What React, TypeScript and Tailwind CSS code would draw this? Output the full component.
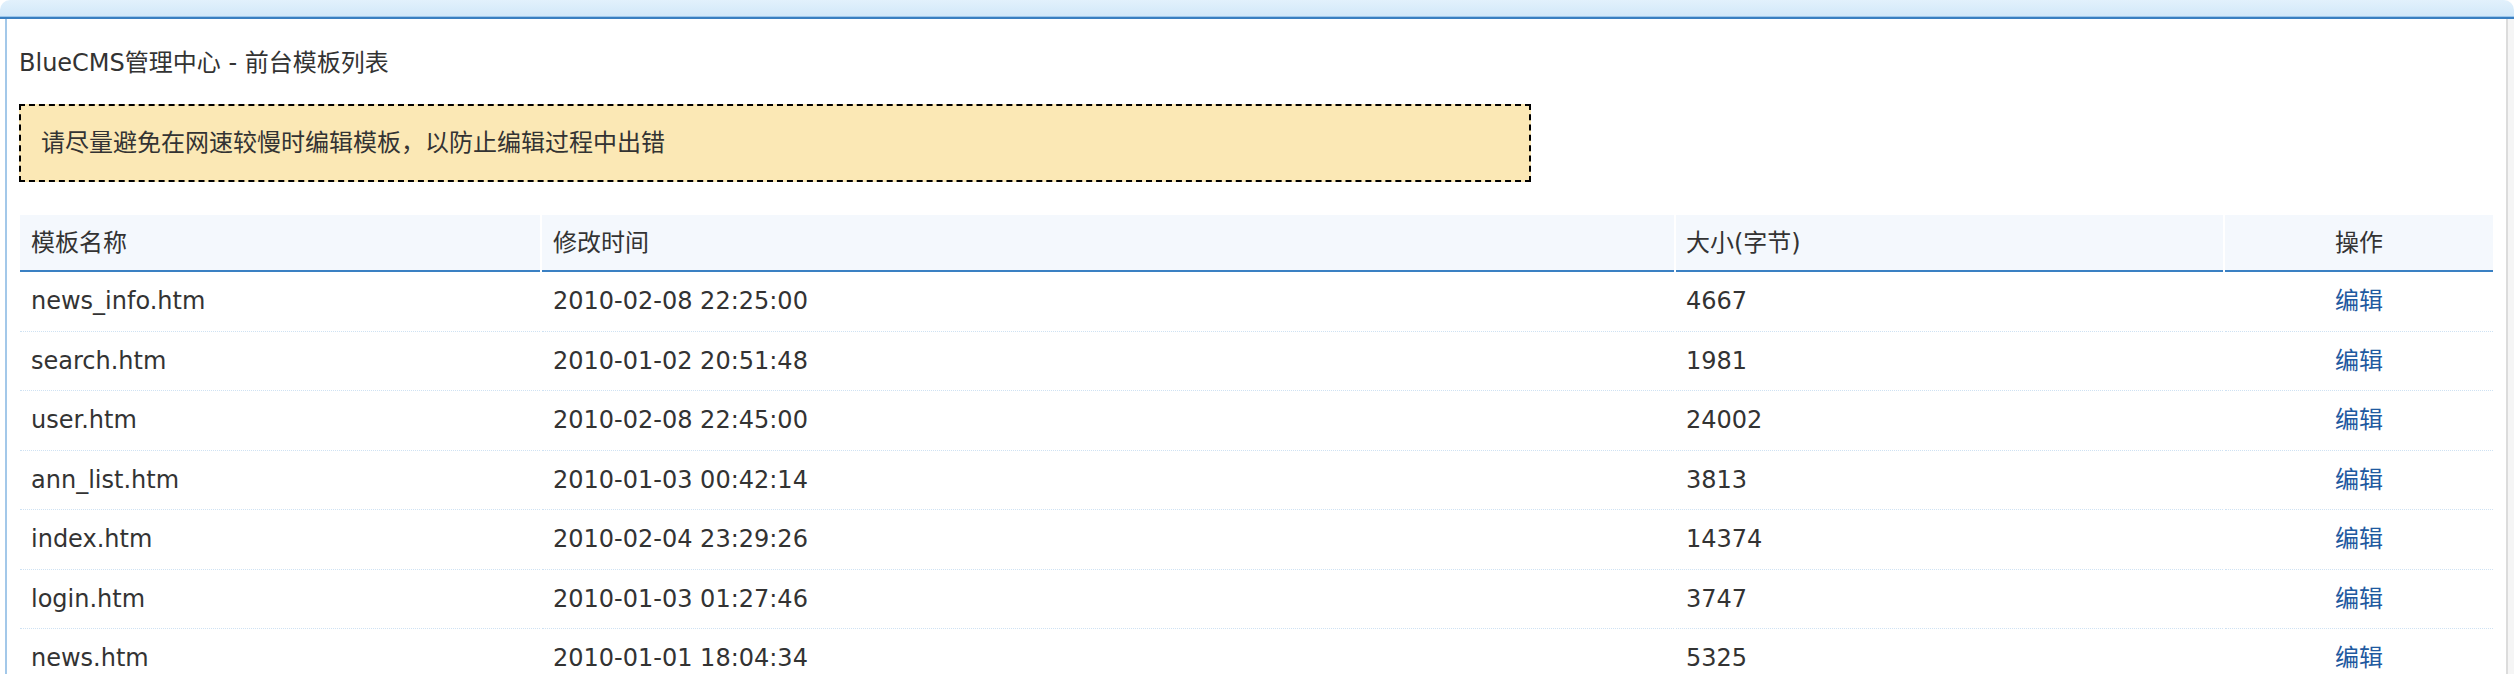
const ROWS = [
  { name: "news_info.htm", time: "2010-02-08 22:25:00", size: "4667" },
  { name: "search.htm", time: "2010-01-02 20:51:48", size: "1981" },
  { name: "user.htm", time: "2010-02-08 22:45:00", size: "24002" },
  { name: "ann_list.htm", time: "2010-01-03 00:42:14", size: "3813" },
  { name: "index.htm", time: "2010-02-04 23:29:26", size: "14374" },
  { name: "login.htm", time: "2010-01-03 01:27:46", size: "3747" },
  { name: "news.htm", time: "2010-01-01 18:04:34", size: "5325" },
];

export default function App() {
  return (
    <div className="min-h-screen bg-white font-['DejaVu_Sans','Noto_Sans_CJK_SC',sans-serif] text-[24px] text-[#333]">
      {/* Top bar */}
      <div className="h-[16px] rounded-t-[10px] bg-gradient-to-b from-[#e2f1fc] to-[#d2e8f9]" />
      <div className="h-[1px] bg-[#9cc7ec]" />
      <div className="h-[2px] bg-[#3a7fc1]" />

      <div className="flex min-h-[655px]">
        <div className="ml-[5px] flex-1 border-l-2 border-[#a3c8e9] pl-[11px] pr-[11px] pt-[26px]">
          <h1 className="ml-[1px] h-[36px] text-[24px] font-normal leading-[36px]">BlueCMS管理中心 - 前台模板列表</h1>

          {/* Notice */}
          <div className="ml-[1px] mt-[23px] flex h-[78px] w-[1512px] items-center border-2 border-dashed border-black bg-[#fbe8b5] pl-[20px]">
            请尽量避免在网速较慢时编辑模板，以防止编辑过程中出错
          </div>

          {/* Template list */}
          <table className="mt-[33px] w-full table-fixed border-separate border-spacing-x-[2px] border-spacing-y-0">
            <thead>
              <tr>
                <th className="h-[57px] w-[520px] border-b-2 border-[#3a80c3] bg-[#f4f8fd] pl-[11px] text-left font-normal">
                  模板名称
                </th>
                <th className="h-[57px] w-[1132px] border-b-2 border-[#3a80c3] bg-[#f4f8fd] pl-[11px] text-left font-normal">
                  修改时间
                </th>
                <th className="h-[57px] w-[547px] border-b-2 border-[#3a80c3] bg-[#f4f8fd] pl-[10px] text-left font-normal">
                  大小(字节)
                </th>
                <th className="h-[57px] border-b-2 border-[#3a80c3] bg-[#f4f8fd] text-center font-normal">操作</th>
              </tr>
            </thead>
            <tbody>
              {ROWS.map((r) => (
                <tr key={r.name}>
                  <td className="h-[59.5px] border-b border-dotted border-[#cfe2f3] pl-[11px]">{r.name}</td>
                  <td className="h-[59.5px] border-b border-dotted border-[#cfe2f3] pl-[11px]">{r.time}</td>
                  <td className="h-[59.5px] border-b border-dotted border-[#cfe2f3] pl-[10px]">{r.size}</td>
                  <td className="h-[59.5px] border-b border-dotted border-[#cfe2f3] text-center">
                    <a href="#" className="text-[#1f5aa0] no-underline">
                      编辑
                    </a>
                  </td>
                </tr>
              ))}
            </tbody>
          </table>
        </div>
        <div className="w-[8px] border-l-2 border-[#dcdcdc] bg-[#f5f5f5]" />
      </div>
    </div>
  );
}
